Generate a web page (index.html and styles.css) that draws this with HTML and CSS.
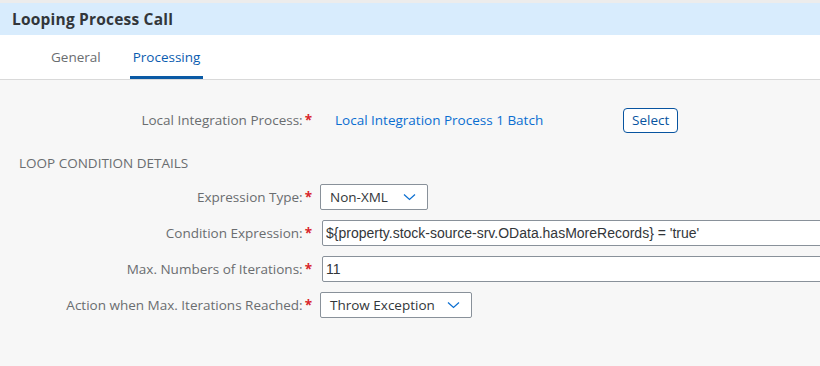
FILE: index.html
```html
<!DOCTYPE html>
<html lang="en">
<head>
  <meta charset="UTF-8">
  <title>Looping Process Call</title>
  <link rel="stylesheet" href="styles.css">
</head>
<body>

  <div class="top-strip"></div>

  <header class="title-bar">Looping Process Call</header>

  <nav class="tabs">
    <span class="tab">General</span>
    <span class="tab active">Processing</span>
  </nav>

  <main class="content">
    <!-- process reference -->
    <div class="process-row">
      <label class="form-label">Local Integration Process:<span class="req">*</span></label>
      <a class="process-link" href="#">Local Integration Process 1 Batch</a>
      <button class="select-btn">Select</button>
    </div>

    <h3 class="section-title">LOOP CONDITION DETAILS</h3>

    <div class="form-grid">
      <label class="form-label">Expression Type:<span class="req">*</span></label>
      <div class="dropdown narrow">
        <span>Non-XML</span>
        <svg class="arrow" width="13" height="8" viewBox="0 0 13 8"><path d="M1 1.5l5.5 5L12 1.5" fill="none" stroke="#0a6ed1" stroke-width="1.2"/></svg>
      </div>

      <label class="form-label">Condition Expression:<span class="req">*</span></label>
      <input class="text-input" type="text" value="${property.stock-source-srv.OData.hasMoreRecords} = 'true'">

      <label class="form-label">Max. Numbers of Iterations:<span class="req">*</span></label>
      <input class="text-input" type="text" value="11">

      <label class="form-label">Action when Max. Iterations Reached:<span class="req">*</span></label>
      <div class="dropdown wide">
        <span>Throw Exception</span>
        <svg class="arrow" width="13" height="8" viewBox="0 0 13 8"><path d="M1 1.5l5.5 5L12 1.5" fill="none" stroke="#0a6ed1" stroke-width="1.2"/></svg>
      </div>
    </div>
  </main>

</body>
</html>
```

FILE: styles.css
```css
body {
  margin: 0;
  padding: 0;
  font-family: "Open Sans", "Noto Sans", Arial, sans-serif;
  background-color: #f7f7f7;
  color: #32363a;
  width: 820px;
  height: 366px;
  overflow: hidden;
}

.top-strip {
  height: 3px;
  background-color: #ececec;
}

.title-bar {
  height: 32px;
  line-height: 32px;
  background-color: #d8ecfd;
  padding-left: 12px;
  font-size: 15.5px;
  font-weight: bold;
  letter-spacing: 0.2px;
  color: #32363a;
}

.tabs {
  display: flex;
  height: 44px;
  background-color: white;
  border-bottom: 1px solid #d9d9d9;
  padding-left: 48px;
  gap: 26px;
}

.tab {
  font-size: 13.5px;
  color: #6a6d70;
  line-height: 44px;
  padding: 0 3px;
  border-bottom: 3px solid transparent;
  height: 41px;
}

.tab.active {
  color: #0a5cb0;
  border-bottom-color: #0a5aa5;
}

.content {
  padding-top: 27px;
}

.form-label {
  font-size: 13.5px;
  color: #6a6d70;
  text-align: right;
  white-space: nowrap;
}

.req {
  color: #d9262c;
  margin-left: 2px;
  font-weight: bold;
}

.process-row {
  display: flex;
  align-items: center;
  height: 26px;
}

.process-row .form-label {
  width: 312px;
}

.process-link {
  font-size: 13.5px;
  color: #0a6ed1;
  text-decoration: none;
  margin-left: 23px;
  width: 288px;
}

.select-btn {
  font-family: inherit;
  font-size: 13.5px;
  color: #0854a0;
  background-color: white;
  border: 1px solid #0854a0;
  border-radius: 4px;
  height: 25px;
  padding: 0 8px;
}

.section-title {
  margin: 21px 0 12px 19px;
  font-size: 13.5px;
  font-weight: normal;
  color: #6a6d70;
}

.form-grid {
  display: grid;
  grid-template-columns: 312px auto;
  column-gap: 9px;
  row-gap: 10px;
  align-items: center;
}

.dropdown {
  display: flex;
  align-items: center;
  justify-content: space-between;
  border: 1px solid #89919a;
  border-radius: 2px;
  background-color: white;
  padding: 0 11px 0 9px;
  font-size: 13.5px;
  color: #32363a;
  box-sizing: border-box;
  height: 26px;
  margin-left: -1px;
}

.dropdown.narrow {
  width: 108px;
}

.dropdown.wide {
  width: 152px;
}

.text-input {
  font-family: "Liberation Sans", Arial, sans-serif;
  font-size: 14px;
  color: #32363a;
  height: 26px;
  box-sizing: border-box;
  width: 520px;
  border: 1px solid #89919a;
  border-radius: 2px;
  padding: 0 3px;
  margin-left: 1px;
}
```
